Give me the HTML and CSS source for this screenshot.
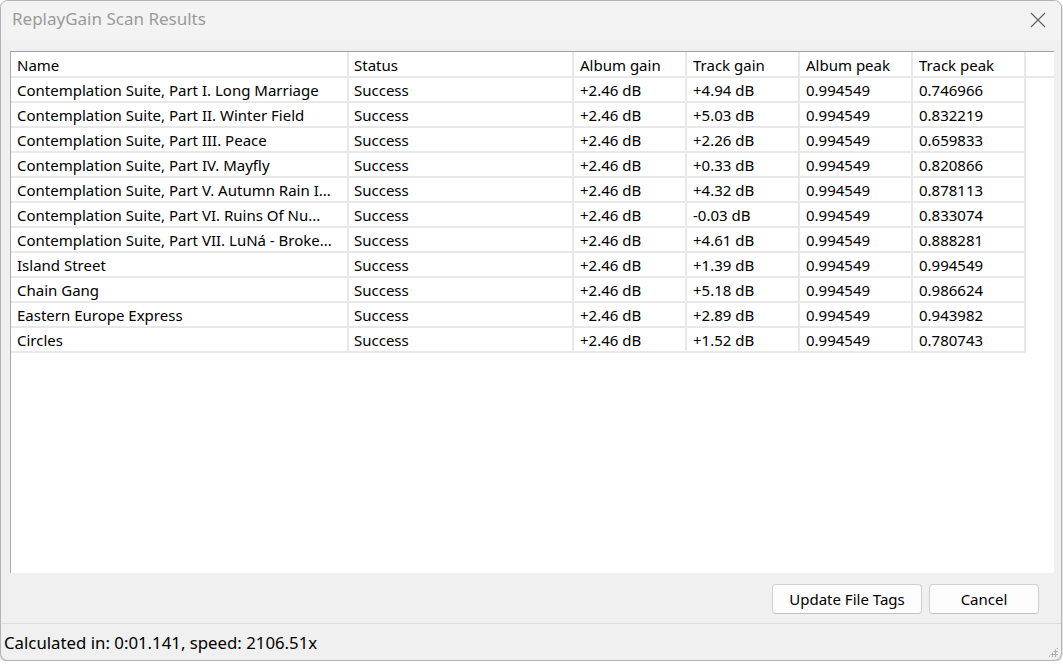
FILE: index.html
```html
<!DOCTYPE html>
<html lang="en">
<head>
  <meta charset="UTF-8">
  <title>ReplayGain Scan Results</title>
  <link rel="stylesheet" href="styles.css">
</head>
<body>

  <div class="window">
    <div class="titlebar">
      <span class="title">ReplayGain Scan Results</span>
      <button class="close" title="Close">
        <svg width="16" height="16" viewBox="0 0 16 16">
          <path d="M1 1 L15 15 M15 1 L1 15" stroke="#5f5f5f" stroke-width="1.1" fill="none"/>
        </svg>
      </button>
    </div>

    <div class="content">
      <div class="results">
        <table class="grid">
          <colgroup>
            <col style="width: 338px">
            <col style="width: 225px">
            <col style="width: 113px">
            <col style="width: 113px">
            <col style="width: 113px">
            <col style="width: 113px">
            <col>
          </colgroup>
          <thead>
            <tr>
              <th>Name</th>
              <th>Status</th>
              <th>Album gain</th>
              <th>Track gain</th>
              <th>Album peak</th>
              <th>Track peak</th>
              <th class="filler"></th>
            </tr>
          </thead>
          <tbody>
            <tr><td>Contemplation Suite, Part I. Long Marriage</td><td>Success</td><td>+2.46 dB</td><td>+4.94 dB</td><td>0.994549</td><td>0.746966</td></tr>
            <tr><td>Contemplation Suite, Part II. Winter Field</td><td>Success</td><td>+2.46 dB</td><td>+5.03 dB</td><td>0.994549</td><td>0.832219</td></tr>
            <tr><td>Contemplation Suite, Part III. Peace</td><td>Success</td><td>+2.46 dB</td><td>+2.26 dB</td><td>0.994549</td><td>0.659833</td></tr>
            <tr><td>Contemplation Suite, Part IV. Mayfly</td><td>Success</td><td>+2.46 dB</td><td>+0.33 dB</td><td>0.994549</td><td>0.820866</td></tr>
            <tr><td>Contemplation Suite, Part V. Autumn Rain I...</td><td>Success</td><td>+2.46 dB</td><td>+4.32 dB</td><td>0.994549</td><td>0.878113</td></tr>
            <tr><td>Contemplation Suite, Part VI. Ruins Of Nu...</td><td>Success</td><td>+2.46 dB</td><td>-0.03 dB</td><td>0.994549</td><td>0.833074</td></tr>
            <tr><td>Contemplation Suite, Part VII. LuNá - Broke...</td><td>Success</td><td>+2.46 dB</td><td>+4.61 dB</td><td>0.994549</td><td>0.888281</td></tr>
            <tr><td>Island Street</td><td>Success</td><td>+2.46 dB</td><td>+1.39 dB</td><td>0.994549</td><td>0.994549</td></tr>
            <tr><td>Chain Gang</td><td>Success</td><td>+2.46 dB</td><td>+5.18 dB</td><td>0.994549</td><td>0.986624</td></tr>
            <tr><td>Eastern Europe Express</td><td>Success</td><td>+2.46 dB</td><td>+2.89 dB</td><td>0.994549</td><td>0.943982</td></tr>
            <tr><td>Circles</td><td>Success</td><td>+2.46 dB</td><td>+1.52 dB</td><td>0.994549</td><td>0.780743</td></tr>
          </tbody>
        </table>
      </div>

      <div class="actions">
        <button class="btn btn-wide">Update File Tags</button>
        <button class="btn">Cancel</button>
      </div>
    </div>

    <div class="statusbar">
      Calculated in: 0:01.141, speed: 2106.51x
      <span class="grip"></span>
    </div>
  </div>

</body>
</html>
```

FILE: styles.css
```css
* {
  margin: 0;
  padding: 0;
  box-sizing: border-box;
}

body {
  background: #ffffff;
  font-family: 'Noto Sans', 'Liberation Sans', sans-serif;
  font-size: 15px;
  color: #000;
}

.window {
  width: 1062px;
  height: 661px;
  display: flex;
  flex-direction: column;
  background: #f0f0f0;
  border: 1px solid #b4b4b4;
  border-radius: 8px;
  overflow: hidden;
  box-shadow: 0 1px 3px rgba(0, 0, 0, 0.3);
}

.titlebar {
  height: 39px;
  flex: none;
  display: flex;
  align-items: center;
  justify-content: space-between;
  padding-left: 11px;
  background: #f3f3f3;
}

.title {
  font-size: 17px;
  color: #9a9a9a;
  margin-top: -4px;
}

.close {
  width: 16px;
  height: 16px;
  margin-right: 15px;
  margin-top: -2px;
  border: none;
  background: none;
  display: flex;
}

.content {
  flex: 1;
  display: flex;
  flex-direction: column;
  padding: 11px 7px 0 9px;
}

.results {
  flex: 1;
  background: #fff;
  border-top: 1px solid #a0a0a0;
  border-left: 1px solid #a8a8a8;
  overflow: hidden;
}

.grid {
  width: 100%;
  table-layout: fixed;
  border-collapse: separate;
  border-spacing: 0;
}

.grid th,
.grid td {
  text-align: left;
  font-weight: normal;
  padding: 0 6px;
  white-space: nowrap;
  overflow: hidden;
  border-right: 2px solid #e8e8e8;
  border-bottom: 2px solid #e8e8e8;
}

.grid th {
  height: 26px;
  line-height: 22px;
  padding-top: 1px;
}

.grid td {
  height: 25px;
  line-height: 22px;
  padding-top: 1px;
}

.grid td:nth-child(2),
.grid th:nth-child(2) {
  padding-left: 5px;
}

.grid th.filler {
  border-right: none;
}

.actions {
  flex: none;
  display: flex;
  justify-content: flex-end;
  gap: 7px;
  padding: 11px 15px 9px 0;
}

.btn {
  width: 110px;
  height: 30px;
  font-family: inherit;
  font-size: 15px;
  background: #fdfdfd;
  border: 1px solid #d0d0d0;
  border-bottom-color: #c2c2c2;
  border-radius: 4px;
  color: #000;
}

.btn-wide {
  width: 150px;
}

.statusbar {
  flex: none;
  height: 37px;
  position: relative;
  display: flex;
  align-items: center;
  padding: 0 0 0 3px;
  border-top: 1px solid #dcdcdc;
  font-size: 16.8px;
}

.grip {
  position: absolute;
  right: 3px;
  bottom: 3px;
  width: 10px;
  height: 10px;
  background-image: radial-gradient(circle, #b0b0b0 1px, transparent 1.2px);
  background-size: 3px 3px;
  clip-path: polygon(100% 0, 100% 100%, 0 100%);
}
```
